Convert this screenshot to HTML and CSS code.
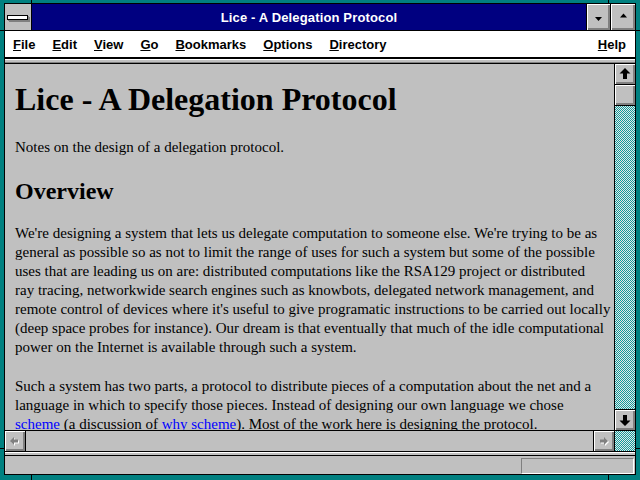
FILE: index.html
```html
<!DOCTYPE html>
<html>
<head>
<meta charset="utf-8">
<title>Lice - A Delegation Protocol</title>
<link rel="stylesheet" href="styles.css">
</head>
<body>
<div class="window">
  <div class="titlebar">
    <div class="sysbox"><div class="sysbar"></div></div>
    <div class="title">Lice - A Delegation Protocol</div>
    <div class="tbtn min">
      <svg width="9" height="5" viewBox="0 0 9 5"><polygon points="1,0 8,0 4.5,4" fill="#000"/></svg>
    </div>
    <div class="tbtn max">
      <svg width="9" height="5" viewBox="0 0 9 5"><polygon points="1,4.5 8,4.5 4.5,0.5" fill="#000"/></svg>
    </div>
  </div>
  <div class="menubar">
    <span class="mi"><u>F</u>ile</span>
    <span class="mi"><u>E</u>dit</span>
    <span class="mi"><u>V</u>iew</span>
    <span class="mi"><u>G</u>o</span>
    <span class="mi"><u>B</u>ookmarks</span>
    <span class="mi"><u>O</u>ptions</span>
    <span class="mi"><u>D</u>irectory</span>
    <span class="mi help"><u>H</u>elp</span>
  </div>
  <div class="sep-top"></div>
  <div class="main">
    <div class="content">
      <h1>Lice - A Delegation Protocol</h1>
      <p class="intro">Notes on the design of a delegation protocol.</p>
      <h2>Overview</h2>
      <p class="p1">We're designing a system that lets us delegate computation to someone else. We're trying to be as<br>general as possible so as not to limit the range of uses for such a system but some of the possible<br>uses that are leading us on are: distributed computations like the RSA129 project or distributed<br>ray tracing, networkwide search engines such as knowbots, delegated network management, and<br>remote control of devices where it's useful to give programatic instructions to be carried out locally<br>(deep space probes for instance). Our dream is that eventually that much of the idle computational<br>power on the Internet is available through such a system.</p>
      <p class="p2">Such a system has two parts, a protocol to distribute pieces of a computation about the net and a<br>language in which to specify those pieces. Instead of designing our own language we chose<br><a href="#">scheme</a> (a discussion of <a href="#">why scheme</a>). Most of the work here is designing the protocol.</p>
    </div>
    <div class="vscroll">
      <div class="sbtn">
        <svg width="20" height="20" viewBox="0 0 20 20"><polygon points="10,4 4.5,9.5 8,9.5 8,15 12,15 12,9.5 15.5,9.5" fill="#000"/></svg>
      </div>
      <div class="thumb"></div>
      <div class="track"></div>
      <div class="sbtn down">
        <svg width="20" height="20" viewBox="0 0 20 20"><polygon points="10,16 4.5,10.5 8,10.5 8,5 12,5 12,10.5 15.5,10.5" fill="#000"/></svg>
      </div>
    </div>
  </div>
  <div class="hscroll">
    <div class="hbtn left">
      <svg width="20" height="20" viewBox="0 0 20 20"><polygon points="6,11 10,7 10,9.5 14,9.5 14,12.5 10,12.5 10,15" fill="#fff"/><polygon points="5,10 9,6 9,8.5 13,8.5 13,11.5 9,11.5 9,14" fill="#808080"/></svg>
    </div>
    <div class="htrack"></div>
    <div class="hbtn right">
      <svg width="20" height="20" viewBox="0 0 20 20"><polygon points="15,11 11,7 11,9.5 7,9.5 7,12.5 11,12.5 11,15" fill="#fff"/><polygon points="14,10 10,6 10,8.5 6,8.5 6,11.5 10,11.5 10,14" fill="#808080"/></svg>
    </div>
    <div class="corner"></div>
  </div>
  <div class="sep-bottom"></div>
  <div class="statusbar">
    <div class="statusbox"></div>
  </div>
</div>
<div class="notch nt1"></div>
<div class="notch nt2"></div>
<div class="notch nb1"></div>
<div class="notch nb2"></div>
<div class="notch nl1"></div>
<div class="notch nl2"></div>
<div class="notch nr1"></div>
<div class="notch nr2"></div>
</body>
</html>
```

FILE: styles.css
```css
html, body {
  margin: 0;
  height: 480px;
  overflow: hidden;
}
body {
  box-sizing: border-box;
  width: 640px;
  padding: 3px 4px 5px 4px;
  background: #008080;
  position: relative;
}
.window {
  box-sizing: border-box;
  height: 472px;
  border: 1px solid #000;
  background: #c0c0c0;
  display: flex;
  flex-direction: column;
}
.titlebar {
  height: 26px;
  display: flex;
  border-bottom: 1px solid #000;
  flex: none;
}
.sysbox {
  width: 26px;
  background: #c0c0c0;
  border-right: 1px solid #000;
  position: relative;
}
.sysbar {
  position: absolute;
  left: 2px;
  top: 11px;
  width: 19px;
  height: 3px;
  background: #fff;
  border: 1px solid #000;
  box-shadow: 1px 1px 0 #808080, 2px 2px 0 #808080;
}
.title {
  flex: 1;
  background: #000080;
  color: #fff;
  font: bold 13px "Liberation Sans", Arial, sans-serif;
  letter-spacing: 0.15px;
  text-align: center;
  line-height: 26px;
  padding-top: 1px;
  box-sizing: border-box;
}
.tbtn {
  background: #c0c0c0;
  border-left: 1px solid #000;
  box-shadow: inset 1px 1px 0 #fff, inset -1px -1px 0 #808080, inset -2px -2px 0 #808080;
  display: flex;
  justify-content: center;
}
.tbtn svg { display: block; }
.min { width: 23px; }
.min svg { margin-top: 13px; }
.max { width: 24px; }
.max svg { margin-top: 9px; }
.menubar {
  height: 26px;
  background: #fff;
  border-bottom: 2px solid #000;
  display: flex;
  align-items: center;
  padding-left: 0;
  font: bold 13px "Liberation Sans", Arial, sans-serif;
  color: #000;
  flex: none;
}
.mi {
  padding: 0 8px 0 8px;
  margin-right: 1px;
}
.help { margin-left: auto; margin-right: 0; padding-right: 9px; }
.sep-top {
  height: 2px;
  border-top: 1px solid #fff;
  border-bottom: 1px solid #808080;
  box-shadow: 0 1px 0 #000;
  margin-bottom: 1px;
  background: #c0c0c0;
  flex: none;
}
.main {
  flex: 1;
  display: flex;
  min-height: 0;
}
.content {
  flex: 1;
  overflow: hidden;
  padding: 17px 0 0 10px;
  font: 15px "Liberation Serif", "Times New Roman", serif;
  color: #000;
  white-space: nowrap;
}
.content h1 {
  font-size: 32px;
  line-height: 37px;
  font-weight: bold;
  margin: 0 0 20px 0;
}
.content h2 {
  font-size: 24px;
  line-height: 28px;
  font-weight: bold;
  margin: 0 0 19px 0;
}
.content p {
  line-height: 19px;
  margin: 0 0 19px 0;
}
.content .intro { margin-bottom: 20px; }
.content .p1 { margin-bottom: 20px; }
.content a { color: #0000ff; text-decoration: underline; }
.vscroll {
  width: 20px;
  border-left: 1px solid #000;
  display: flex;
  flex-direction: column;
}
.sbtn, .thumb {
  height: 20px;
  background: #c0c0c0;
  box-shadow: inset 1px 1px 0 #fff, inset -1px -1px 0 #808080, inset -2px -2px 0 #808080;
  flex: none;
}
.sbtn svg { display: block; }
.thumb {
  border-top: 1px solid #000;
  border-bottom: 1px solid #000;
}
.down { border-top: 1px solid #000; }
.track, .corner {
  background-color: #e8e8e8;
  background-image: repeating-conic-gradient(#109c9c 0 25%, transparent 0 50%);
  background-size: 2px 2px;
}
.track { flex: 1; }
.hscroll {
  height: 20px;
  border-top: 1px solid #000;
  border-bottom: 1px solid #000;
  display: flex;
  flex: none;
}
.hbtn {
  width: 20px;
  background: #c0c0c0;
  box-shadow: inset 1px 1px 0 #fff, inset -1px -1px 0 #808080, inset -2px -2px 0 #808080;
}
.hbtn svg { display: block; }
.left { border-right: 1px solid #000; }
.right { border-left: 1px solid #000; }
.htrack { flex: 1; background: #c0c0c0; }
.corner { width: 20px; border-left: 1px solid #000; }
.sep-bottom {
  height: 2px;
  border-top: 1px solid #fff;
  border-bottom: 1px solid #000;
  flex: none;
}
.statusbar {
  height: 18px;
  flex: none;
  display: flex;
  justify-content: flex-end;
  align-items: flex-start;
}
.statusbox {
  width: 111px;
  height: 14px;
  margin: 2px 1px 0 0;
  border-top: 1px solid #808080;
  border-left: 1px solid #808080;
  border-bottom: 1px solid #fff;
  border-right: 1px solid #fff;
}
.notch { position: absolute; background: #000; }
.nt1 { left: 31px; top: 0; width: 1px; height: 4px; }
.nt2 { left: 608px; top: 0; width: 1px; height: 4px; }
.nb1 { left: 31px; bottom: 0; width: 1px; height: 5px; }
.nb2 { left: 608px; bottom: 0; width: 1px; height: 5px; }
.nl1 { left: 0; top: 30px; width: 4px; height: 1px; }
.nl2 { left: 0; top: 448px; width: 4px; height: 1px; }
.nr1 { right: 0; top: 30px; width: 4px; height: 1px; }
.nr2 { right: 0; top: 448px; width: 4px; height: 1px; }
```
